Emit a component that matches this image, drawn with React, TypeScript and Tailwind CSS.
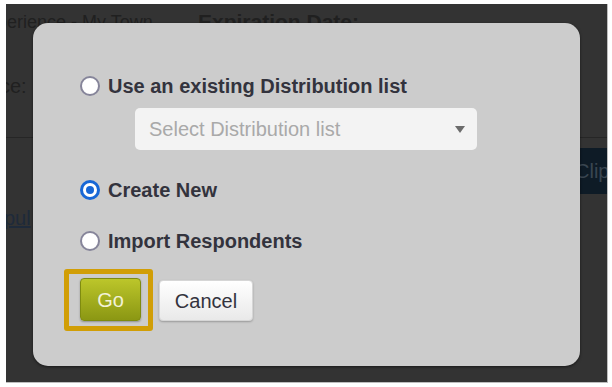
import React from 'react'

const font = { fontFamily: '"Liberation Sans", Arial, sans-serif' }

function Radio({ checked }: { checked?: boolean }) {
  if (checked) {
    return (
      <span className="w-[20px] h-[20px] rounded-full border-[3px] border-[#1767d6] bg-white flex items-center justify-center flex-shrink-0">
        <span className="w-[8px] h-[8px] rounded-full bg-[#1767d6]" />
      </span>
    )
  }
  return <span className="w-[20px] h-[20px] rounded-full border-2 border-[#86859a] bg-white flex-shrink-0" />
}

function Option({ label, checked }: { label: string; checked?: boolean }) {
  return (
    <label className="flex items-center gap-[8px] h-[24px]">
      <Radio checked={checked} />
      <span className="text-[20px] font-bold text-[#33333d] leading-[24px]">{label}</span>
    </label>
  )
}

export default function App() {
  return (
    <div className="w-[612px] h-[387px] bg-white pt-[4px] pl-[6px] pr-[4px] pb-[4px]" style={font}>
      <div className="relative w-full h-full bg-[#333333] overflow-hidden border-r border-b border-[#bdbdbd]">
        {/* page behind the overlay */}
        <div className="flex items-end h-[30px] text-[#202020]">
          <div className="w-[192px] flex-shrink-0 overflow-hidden">
            <span className="block text-[18px] leading-[24px] ml-[-9px] whitespace-nowrap">perience - My Town</span>
          </div>
          <span className="text-[21px] font-bold leading-[24px] whitespace-nowrap">Expiration Date:</span>
        </div>
        <div className="mt-[40px] text-[20px] leading-[24px] text-[#202020] ml-[-6px] whitespace-nowrap">
          ce: <span className="text-[#2a2a2a]">.</span>
        </div>
        <div className="mt-[39px] h-[1px] bg-[#262626]" />
        <div className="flex justify-end mt-[10px]">
          <div className="w-[34px] h-[46px] bg-[#0e1b26] text-[#3a4651] text-[20px] leading-[46px] pl-[2px] overflow-hidden whitespace-nowrap">Clip</div>
        </div>
        <div className="mt-[12px] text-[20px] leading-[24px] text-[#1e2a3a] underline ml-[-2px]">pul</div>

        {/* dialog */}
        <div className="absolute left-[27px] top-[19px] w-[547px] h-[343px] bg-[#cccccc] rounded-[15px] shadow-[0_1px_3px_rgba(0,0,0,0.55)]">
          <div className="flex flex-col pt-[51px] pl-[47px]">
            <Option label="Use an existing Distribution list" />
            <div className="mt-[10px] ml-[55px] w-[342px] h-[42px] bg-[#f3f3f3] rounded-[5px] flex items-center justify-between pl-[14px] pr-[12px]">
              <span className="text-[20px] text-[#a9a9a9]">Select Distribution list</span>
              <svg width="10" height="7" viewBox="0 0 10 7">
                <path d="M0 0h10L5 7z" fill="#6b6b6b" />
              </svg>
            </div>
            <div className="mt-[28px]">
              <Option label="Create New" checked />
            </div>
            <div className="mt-[27px]">
              <Option label="Import Respondents" />
            </div>
            <div className="mt-[16px] ml-[-16px] flex items-start gap-[6px]">
              <div className="border-[5px] border-[#d19e06] rounded-[3px] pl-[11px] pr-[7px] pt-[4px] pb-[5px]">
                <button className="w-[61px] h-[43px] rounded-[4px] bg-gradient-to-b from-[#bcc62a] to-[#8b9713] border border-[#7f8b10] text-[20px] text-[#f2f2d8] shadow-[0_1px_2px_rgba(0,0,0,0.3)]">
                  Go
                </button>
              </div>
              <button className="mt-[11px] w-[94px] h-[41px] rounded-[4px] bg-gradient-to-b from-white to-[#e9e9e9] border border-[#d6d6d6] text-[20px] text-[#33333d] shadow-[0_1px_2px_rgba(0,0,0,0.25)]">
                Cancel
              </button>
            </div>
          </div>
        </div>
      </div>
    </div>
  )
}
